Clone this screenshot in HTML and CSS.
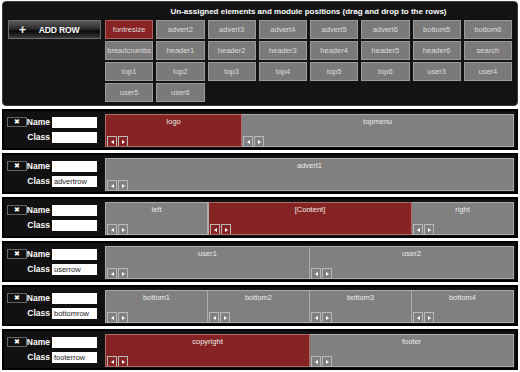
FILE: index.html
```html
<!DOCTYPE html>
<html lang="en">
<head>
    <meta charset="UTF-8">
    <title>Layout Manager</title>
    <link rel="stylesheet" href="styles.css">
</head>
<body>
    <div class="pool">
        <div class="pool-title">Un-assigned elements and module positions (drag and drop to the rows)</div>
        <button class="add-row"><span class="plus">+</span>ADD ROW</button>
        <div class="tiles">
            <div class="tile active">fontresize</div>
            <div class="tile">advert2</div>
            <div class="tile">advert3</div>
            <div class="tile">advert4</div>
            <div class="tile">advert5</div>
            <div class="tile">advert6</div>
            <div class="tile">bottom5</div>
            <div class="tile">bottom6</div>
            <div class="tile">breadcrumbs</div>
            <div class="tile">header1</div>
            <div class="tile">header2</div>
            <div class="tile">header3</div>
            <div class="tile">header4</div>
            <div class="tile">header5</div>
            <div class="tile">header6</div>
            <div class="tile">search</div>
            <div class="tile">top1</div>
            <div class="tile">top2</div>
            <div class="tile">top3</div>
            <div class="tile">top4</div>
            <div class="tile">top5</div>
            <div class="tile">top6</div>
            <div class="tile">user3</div>
            <div class="tile">user4</div>
            <div class="tile">user5</div>
            <div class="tile">user6</div>
        </div>
    </div>

    <div class="rows">
        <div class="row">
            <div class="row-meta">
                <button class="del">&#10006;</button>
                <label>Name</label><input type="text">
                <label class="second">Class</label><input type="text">
            </div>
            <div class="modules">
                <div class="module red w1"><span>logo</span><div class="arrows"><i class="left"></i><i class="right"></i></div></div>
                <div class="module w2"><span>topmenu</span><div class="arrows"><i class="left"></i><i class="right"></i></div></div>
            </div>
        </div>

        <div class="row">
            <div class="row-meta">
                <button class="del">&#10006;</button>
                <label>Name</label><input type="text">
                <label class="second">Class</label><input type="text" value="advertrow">
            </div>
            <div class="modules">
                <div class="module w1"><span>advert1</span><div class="arrows"><i class="left"></i><i class="right"></i></div></div>
            </div>
        </div>

        <div class="row">
            <div class="row-meta">
                <button class="del">&#10006;</button>
                <label>Name</label><input type="text">
                <label class="second">Class</label><input type="text">
            </div>
            <div class="modules">
                <div class="module w1"><span>left</span><div class="arrows"><i class="left"></i><i class="right"></i></div></div>
                <div class="module red w2"><span>[Content]</span><div class="arrows"><i class="left"></i><i class="right"></i></div></div>
                <div class="module w1"><span>right</span><div class="arrows"><i class="left"></i><i class="right"></i></div></div>
            </div>
        </div>

        <div class="row">
            <div class="row-meta">
                <button class="del">&#10006;</button>
                <label>Name</label><input type="text">
                <label class="second">Class</label><input type="text" value="userrow">
            </div>
            <div class="modules">
                <div class="module w1"><span>user1</span><div class="arrows"><i class="left"></i><i class="right"></i></div></div>
                <div class="module w1"><span>user2</span><div class="arrows"><i class="left"></i><i class="right"></i></div></div>
            </div>
        </div>

        <div class="row">
            <div class="row-meta">
                <button class="del">&#10006;</button>
                <label>Name</label><input type="text">
                <label class="second">Class</label><input type="text" value="bottomrow">
            </div>
            <div class="modules">
                <div class="module w1"><span>bottom1</span><div class="arrows"><i class="left"></i><i class="right"></i></div></div>
                <div class="module w1"><span>bottom2</span><div class="arrows"><i class="left"></i><i class="right"></i></div></div>
                <div class="module w1"><span>bottom3</span><div class="arrows"><i class="left"></i><i class="right"></i></div></div>
                <div class="module w1"><span>bottom4</span><div class="arrows"><i class="left"></i><i class="right"></i></div></div>
            </div>
        </div>

        <div class="row">
            <div class="row-meta">
                <button class="del">&#10006;</button>
                <label>Name</label><input type="text">
                <label class="second">Class</label><input type="text" value="footerrow">
            </div>
            <div class="modules">
                <div class="module red w1"><span>copyright</span><div class="arrows"><i class="left"></i><i class="right"></i></div></div>
                <div class="module w1"><span>footer</span><div class="arrows"><i class="left"></i><i class="right"></i></div></div>
            </div>
        </div>
    </div>
</body>
</html>
```

FILE: styles.css
```css
body {
    margin: 0;
    padding: 1px 2px;
    background: #fff;
    font-family: "Liberation Sans", Arial, Helvetica, sans-serif;
}
.pool {
    display: grid;
    grid-template-columns: 93px 1fr;
    column-gap: 4px;
    background: #131313;
    border: 1px solid #3a3a3a;
    border-radius: 4px;
    padding: 4px 5px 3px 5px;
    height: 105px;
    box-sizing: border-box;
}
.pool-title {
    grid-column: 2;
    text-align: center;
    color: #fff;
    font-weight: bold;
    font-size: 8px;
    line-height: 11px;
    margin-bottom: 3px;
}
.add-row {
    grid-column: 1;
    grid-row: 2;
    align-self: start;
    height: 19px;
    display: flex;
    align-items: center;
    padding: 0 0 0 10px;
    border: 1px solid #6f6f6f;
    background: linear-gradient(#5a5a5a 0%, #2c2c2c 45%, #0a0a0a 60%, #3a3a3a 100%);
    color: #fff;
    font-family: inherit;
    font-weight: bold;
    font-size: 8.6px;
    letter-spacing: -0.2px;
}
.plus {
    font-size: 12px;
    margin-right: 13px;
}
.tiles {
    grid-column: 2;
    grid-row: 2;
    display: grid;
    grid-template-columns: repeat(8, 1fr);
    grid-auto-rows: 19px;
    column-gap: 3px;
    row-gap: 2px;
}
.tile {
    background: #7a7a7a;
    border: 1px solid #9c9c9c;
    color: #dcdcdc;
    font-size: 7.5px;
    display: flex;
    align-items: center;
    justify-content: center;
    box-sizing: border-box;
}
.tile.active {
    background: #892424;
    border-color: #b06060;
}
.rows {
    margin-top: 3px;
    display: flex;
    flex-direction: column;
    gap: 3px;
}
.row {
    height: 41px;
    box-sizing: border-box;
    display: flex;
    background: #111;
    border: 2px solid #000;
    padding: 3px 2px 1px 0;
}
.row-meta {
    width: 101px;
    display: grid;
    grid-template-columns: 20px 21px 45px;
    grid-template-rows: 11px 11px;
    column-gap: 2px;
    row-gap: 4px;
    padding: 3px 0 0 3px;
    box-sizing: border-box;
    align-content: start;
}
.del {
    grid-row: 1;
    grid-column: 1;
    width: 20px;
    height: 10px;
    padding: 0;
    background: #111;
    border: 1px solid #666;
    color: #fff;
    font-size: 7px;
    line-height: 8px;
}
.row-meta label {
    color: #fff;
    font-weight: bold;
    font-size: 8.5px;
    line-height: 11px;
    text-align: right;
    grid-column: 2;
    margin-left: -6px;
}
.row-meta input {
    grid-column: 3;
    height: 11px;
    box-sizing: border-box;
    border: none;
    margin: 0;
    padding: 0 2px;
    background: #fff;
    font-family: inherit;
    font-size: 7.5px;
    color: #222;
}
.modules {
    flex: 1;
    display: flex;
    height: 33px;
}
.module {
    display: flex;
    flex-direction: column;
    align-items: center;
    background: #808080;
    border: 1px solid #adadad;
    box-sizing: border-box;
    color: #ececec;
    font-size: 7.5px;
    padding-top: 2px;
    min-width: 0;
}
.module + .module {
    border-left: none;
}
.module.red {
    background: #862424;
    border-color: #b26a6a;
}
.module + .module.red {
    border-left: 1px solid #adadad;
}
.w1 { flex: 1; }
.w2 { flex: 2; }
.arrows {
    margin-top: auto;
    align-self: flex-start;
    display: flex;
    gap: 1px;
    padding-left: 1px;
}
.arrows i {
    width: 10px;
    height: 10px;
    box-sizing: border-box;
    border: 1px solid #b8b8b8;
    border-bottom: none;
    display: flex;
    align-items: center;
    justify-content: center;
}
.arrows i::before {
    content: "";
    border-top: 2.5px solid transparent;
    border-bottom: 2.5px solid transparent;
}
.arrows i.left::before {
    border-right: 3px solid #fff;
}
.arrows i.right::before {
    border-left: 3px solid #fff;
}
```
